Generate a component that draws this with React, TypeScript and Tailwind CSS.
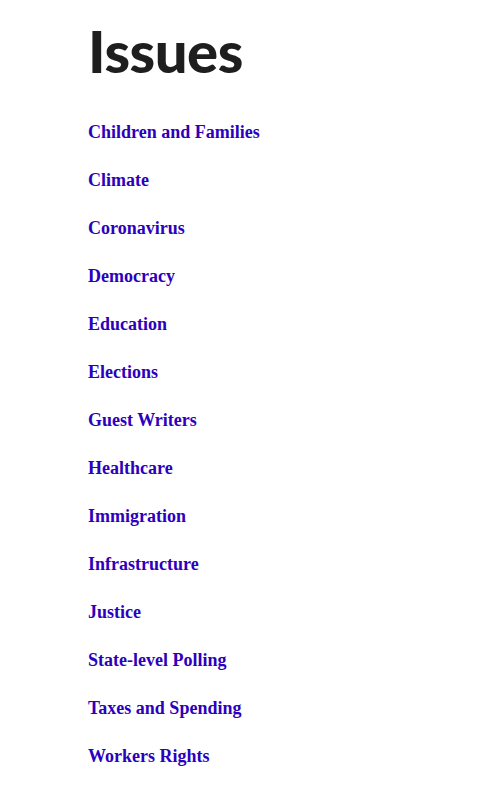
const issues = [
  "Children and Families",
  "Climate",
  "Coronavirus",
  "Democracy",
  "Education",
  "Elections",
  "Guest Writers",
  "Healthcare",
  "Immigration",
  "Infrastructure",
  "Justice",
  "State-level Polling",
  "Taxes and Spending",
  "Workers Rights",
];

export default function App() {
  return (
    <div className="min-h-screen bg-white pl-[88px] pt-[16px]">
      <h1 className="text-[58px] leading-[70px] font-black tracking-[-0.5px] text-[#1e1e1e] font-['Lato',sans-serif]">
        Issues
      </h1>
      <ul className="mt-[34px] flex flex-col">
        {issues.map((issue) => (
          <li key={issue} className="h-[48px]">
            <a
              href="#"
              className="text-[18px] leading-[24px] font-bold text-[#2c00bd] font-['Liberation_Serif',serif]"
            >
              {issue}
            </a>
          </li>
        ))}
      </ul>
    </div>
  );
}
